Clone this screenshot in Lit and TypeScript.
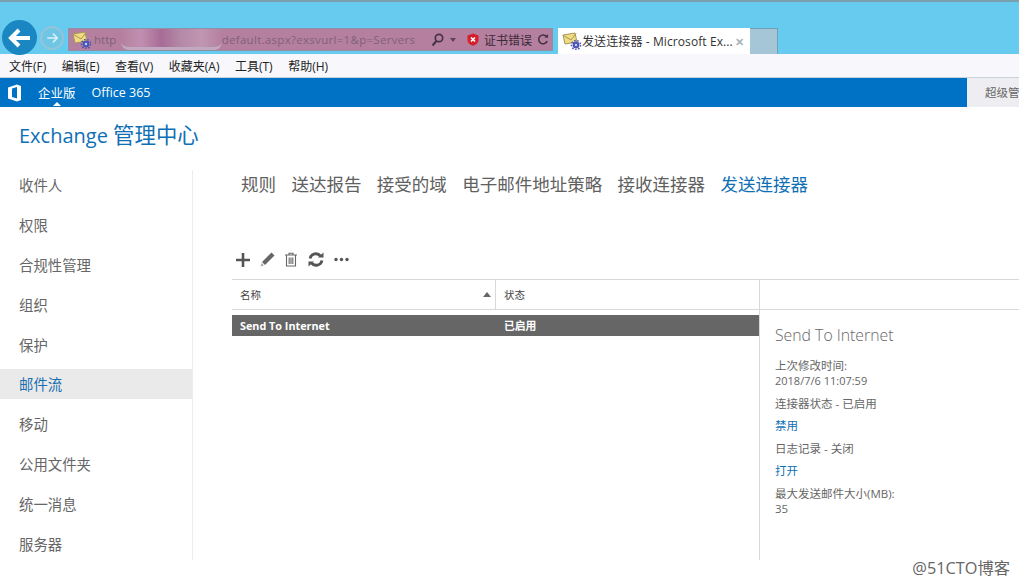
import { LitElement, html, css, svg } from "lit";
import { customElement } from "lit/decorators.js";

const menus = ["文件(F)", "编辑(E)", "查看(V)", "收藏夹(A)", "工具(T)", "帮助(H)"];
const navItems = ["收件人", "权限", "合规性管理", "组织", "保护", "邮件流", "移动", "公用文件夹", "统一消息", "服务器"];
const tabs = ["规则", "送达报告", "接受的域", "电子邮件地址策略", "接收连接器", "发送连接器"];

const favicon = svg`<svg class="fav" width="20" height="18" viewBox="0 0 20 18">
  <path d="M1 3 L13 1 L15 10 L3 12 Z" fill="#f0dc82" stroke="#a8955a" stroke-width="1"/>
  <path d="M1.5 3.5 L9 8 L14 1.5" fill="none" stroke="#a8955a" stroke-width="1"/>
  <circle cx="14" cy="13" r="3.4" fill="#4a55b5"/>
  <circle cx="14" cy="13" r="4.6" fill="none" stroke="#4a55b5" stroke-width="1.4" stroke-dasharray="1.6 1.6"/>
  <circle cx="14" cy="13" r="1.2" fill="#c8d0f0"/>
</svg>`;

@customElement("app-root")
export class AppRoot extends LitElement {
  static styles = css`
    :host {
      display: block;
      width: 1019px;
      height: 585px;
      overflow: hidden;
      background: #fff;
      font-family: "Open Sans", "Noto Sans CJK SC", sans-serif;
      color: #444;
    }
    .chrome {
      height: 54px;
      box-sizing: border-box;
      background: #66cbee;
      border-top: 2px solid #7a9fae;
      display: flex;
      align-items: flex-start;
      padding: 18px 0 0 2px;
    }
    .back {
      width: 35px;
      height: 35px;
      border-radius: 50%;
      background: #1a86c2;
      display: flex;
      align-items: center;
      justify-content: center;
      flex: none;
    }
    .forward {
      width: 24px;
      height: 24px;
      margin: 6px 0 0 3px;
      box-sizing: border-box;
      border-radius: 50%;
      border: 2px solid #93c4d9;
      background: #6ec5e4;
      display: flex;
      align-items: center;
      justify-content: center;
      flex: none;
    }
    .address {
      margin: 8px 0 0 4px;
      width: 485px;
      height: 23px;
      box-sizing: border-box;
      background: #b5809f;
      border: 1px solid #8f8fa5;
      display: flex;
      align-items: center;
      padding: 0 3px;
      font-size: 11.5px;
      color: #80607a;
      white-space: nowrap;
      flex: none;
    }
    .address .fav {
      flex: none;
    }
    .url-start {
      margin-left: 2px;
      width: 27px;
    }
    .smudge {
      width: 101px;
      height: 21px;
      box-sizing: border-box;
      border-bottom: 3px solid #c0aabf;
      border-radius: 0 0 8px 8px;
      background: linear-gradient(90deg, #b5809f, #c08fb0 20%, #a86c96 40%, #b58aa8 60%, #c096b2 80%, #b5809f);
    }
    .url-end {
      letter-spacing: 0.3px;
      width: 210px;
    }
    .addr-tools {
      display: flex;
      align-items: center;
      color: #3a2a38;
      font-size: 12px;
    }
    .caret {
      width: 0;
      height: 0;
      border: 3px solid transparent;
      border-top: 4px solid #5a4558;
      border-bottom: 0;
      margin: 0 11px 0 6px;
    }
    .cert {
      margin: 0 5px;
    }
    .tab {
      margin: 8px 0 0 5px;
      width: 192px;
      height: 26px;
      box-sizing: border-box;
      background: #fff;
      display: flex;
      align-items: center;
      padding: 0 6px 0 4px;
      font-size: 12px;
      color: #333;
      white-space: nowrap;
      flex: none;
    }
    .tab span {
      flex: 1;
      letter-spacing: 0.1px;
    }
    .tab b {
      color: #a9b4bc;
      font-weight: 700;
      font-size: 11px;
    }
    .tab-blank {
      margin-top: 8px;
      width: 28px;
      height: 26px;
      box-sizing: border-box;
      background: #a5c6d6;
      border: 1px solid #6fa0b8;
      border-bottom: 0;
      border-left: 0;
      flex: none;
    }
    .menubar {
      height: 23px;
      background: #f8f8fc;
      display: flex;
      align-items: center;
      gap: 15.5px;
      padding-left: 9px;
      font-size: 12px;
      color: #222;
    }
    .o365 {
      height: 30px;
      box-sizing: border-box;
      border-top: 1px solid #c8d4dc;
      background: #0072c6;
      display: flex;
      align-items: center;
      color: #fff;
      font-size: 12.5px;
    }
    .o365 svg {
      margin: 0 15px 0 7px;
    }
    .o365 .suite {
      position: relative;
      margin-right: 16px;
    }
    .o365 .suite::after {
      content: "";
      position: absolute;
      left: 50%;
      margin-left: -4px;
      top: 19px;
      border: 4px solid transparent;
      border-top: 0;
      border-bottom-color: #fff;
    }
    .o365 .grow {
      flex: 1;
    }
    .user {
      width: 52px;
      height: 100%;
      box-sizing: border-box;
      padding-left: 18px;
      background: #eeeef2;
      color: #666;
      font-size: 11.5px;
      line-height: 29px;
      white-space: nowrap;
      overflow: hidden;
    }
    h1 {
      margin: 0;
      height: 63px;
      box-sizing: border-box;
      padding: 14px 0 0 19px;
      font-size: 20px;
      line-height: 28px;
      font-weight: 400;
      color: #0f6fb5;
    }
    h1 span {
      font-size: 21.4px;
    }
    .body {
      display: flex;
      height: 390px;
    }
    nav {
      width: 193px;
      box-sizing: border-box;
      border-right: 1px solid #ececec;
      flex: none;
    }
    nav div {
      height: 39.9px;
      font-size: 14.4px;
      color: #666;
    }
    nav div span {
      display: block;
      height: 30px;
      box-sizing: border-box;
      padding: 1px 0 0 19px;
      line-height: 30px;
    }
    nav div.on span {
      background: #eaeaea;
      color: #1a6fae;
    }
    .main {
      flex: 1;
      display: flex;
      flex-direction: column;
      min-width: 0;
    }
    .tabs {
      display: flex;
      gap: 15.4px;
      padding: 1px 0 0 48px;
      height: 66px;
      box-sizing: border-box;
      font-size: 17.5px;
      line-height: 26px;
      color: #606060;
    }
    .tabs .on {
      color: #0f6fb5;
    }
    .tools {
      height: 43px;
      display: flex;
      align-items: center;
      padding: 4px 0 0 42px;
      box-sizing: border-box;
    }
    .tools svg {
      margin-right: 8px;
    }
    .tools svg.wide {
      margin-right: 10px;
    }
    .grid {
      display: flex;
      flex: 1;
      min-height: 0;
    }
    .list {
      width: 527px;
      margin-left: 39px;
      flex: none;
    }
    .thead {
      height: 31px;
      box-sizing: border-box;
      border-top: 1px solid #d8d8d8;
      border-bottom: 1px solid #d8d8d8;
      display: flex;
      font-size: 10.5px;
      color: #444;
      line-height: 30px;
    }
    .thead .name {
      width: 264px;
      box-sizing: border-box;
      padding: 0 4px 0 8px;
      border-right: 1px solid #d8d8d8;
      display: flex;
      justify-content: space-between;
      align-items: center;
    }
    .thead .status {
      padding-left: 8px;
    }
    .sort {
      width: 0;
      height: 0;
      border: 4px solid transparent;
      border-top: 0;
      border-bottom: 5px solid #666;
    }
    .row {
      margin-top: 5px;
      height: 21px;
      background: #666;
      color: #fff;
      display: flex;
      font-size: 10.8px;
      font-weight: 700;
      line-height: 21px;
    }
    .row span:first-child {
      width: 264px;
      box-sizing: border-box;
      padding-left: 8px;
    }
    .row span:last-child {
      padding-left: 8px;
    }
    .side {
      flex: 1;
      border-left: 1px solid #d8d8d8;
      display: flex;
      flex-direction: column;
    }
    .side-head {
      height: 31px;
      box-sizing: border-box;
      border-top: 1px solid #d8d8d8;
      border-bottom: 1px solid #d8d8d8;
    }
    .detail {
      padding: 14px 0 0 15px;
      font-size: 11.5px;
      line-height: 15px;
      color: #666;
    }
    .detail h2 {
      margin: 0 0 12px;
      font-size: 15.8px;
      line-height: 22px;
      font-weight: 300;
      color: #666;
    }
    .detail p {
      margin: 0 0 7.6px;
    }
    .detail .date {
      font-size: 11px;
    }
    .detail a {
      color: #0f6fb5;
      display: block;
      margin-bottom: 7.6px;
    }
    .mark {
      text-align: right;
      padding-right: 9px;
      font-size: 16.3px;
      line-height: 16px;
      color: #666;
    }
  `;

  render() {
    return html`
      <div class="chrome">
        <div class="back">
          <svg width="24" height="20" viewBox="0 0 24 20"><path d="M11 2 L3 10 L11 18 M3.5 10 H22" fill="none" stroke="#fff" stroke-width="4"/></svg>
        </div>
        <div class="forward">
          <svg width="13" height="12" viewBox="0 0 15 13"><path d="M8 1.5 L13 6.5 L8 11.5 M13 6.5 H1.5" fill="none" stroke="#d8f0f8" stroke-width="1.8"/></svg>
        </div>
        <div class="address">
          ${favicon}
          <span class="url-start">http</span>
          <span class="smudge"></span>
          <span class="url-end">default.aspx?exsvurl=1&amp;p=Servers</span>
          <span class="addr-tools">
            <svg width="13" height="14" viewBox="0 0 13 14"><circle cx="8" cy="5" r="3.7" fill="none" stroke="#453345" stroke-width="1.7"/><path d="M5.4 8 L1.5 12.5" stroke="#453345" stroke-width="2"/></svg>
            <i class="caret"></i>
            <svg width="12" height="13" viewBox="0 0 12 13"><path d="M6 .5 L11.5 2.5 V7 C11.5 10 8.5 12 6 12.8 C3.5 12 .5 10 .5 7 V2.5 Z" fill="#d5202c"/><path d="M4 4.5 L8 8.5 M8 4.5 L4 8.5" stroke="#fff" stroke-width="1.6"/></svg>
            <span class="cert">证书错误</span>
            <svg width="12" height="13" viewBox="0 0 12 13"><path d="M9.8 4 A4.4 4.4 0 1 0 10.2 8" fill="none" stroke="#453345" stroke-width="1.6"/><path d="M7.5 4.6 L11 4.8 V1 Z" fill="#453345"/></svg>
          </span>
        </div>
        <div class="tab">
          ${favicon}<span>发送连接器 - Microsoft Ex...</span><b>✕</b>
        </div>
        <div class="tab-blank"></div>
      </div>
      <div class="menubar">
        ${menus.map((m) => html`<span>${m}</span>`)}
      </div>
      <div class="o365">
        <svg width="16" height="18" viewBox="0 0 16 18"><path d="M1 3.5 L10 .5 L14 2 V16 L10 17.5 L1 14.5 Z M10 3 L5 4.5 V13 L10 14.5 Z" fill="#fff" fill-rule="evenodd"/></svg>
        <span class="suite">企业版</span>
        <span>Office 365</span>
        <span class="grow"></span>
        <div class="user">超级管理员</div>
      </div>
      <h1>Exchange <span>管理中心</span></h1>
      <div class="body">
        <nav>
          ${navItems.map((n) => html`<div class=${n === "邮件流" ? "on" : ""}><span>${n}</span></div>`)}
        </nav>
        <div class="main">
          <div class="tabs">
            ${tabs.map((t) => html`<span class=${t === "发送连接器" ? "on" : ""}>${t}</span>`)}
          </div>
          <div class="tools">
            <svg width="16" height="16" viewBox="0 0 16 16"><path d="M8 1 V15 M1 8 H15" stroke="#555" stroke-width="2.6"/></svg>
            <svg width="17" height="17" viewBox="0 0 17 17"><path d="M12.5 1.5 L15.5 4.5 L6 14 L3 11 Z" fill="#666"/><path d="M2.5 12 L5 14.5 L1.5 15.5 Z" fill="#aaa"/></svg>
            <svg class="wide" width="14" height="15" viewBox="0 0 14 15"><path d="M1 3 H13 M5 3 V1.2 H9 V3 M2.5 3 V14 H11.5 V3 M5.2 5.5 V12 M7 5.5 V12 M8.8 5.5 V12" fill="none" stroke="#666" stroke-width="1.1"/></svg>
            <svg class="wide" width="16" height="15" viewBox="0 0 16 15"><path d="M2 6.5 A6 6 0 0 1 12.5 4 M14 8.5 A6 6 0 0 1 3.5 11" fill="none" stroke="#555" stroke-width="2.8"/><path d="M10 5.5 H15.5 V0.5 Z M6 9.5 H.5 V14.5 Z" fill="#555"/></svg>
            <svg width="15" height="5" viewBox="0 0 15 5"><circle cx="2" cy="2.5" r="1.7" fill="#555"/><circle cx="7.5" cy="2.5" r="1.7" fill="#555"/><circle cx="13" cy="2.5" r="1.7" fill="#555"/></svg>
          </div>
          <div class="grid">
            <div class="list">
              <div class="thead">
                <div class="name">名称<i class="sort"></i></div>
                <div class="status">状态</div>
              </div>
              <div class="row"><span>Send To Internet</span><span>已启用</span></div>
            </div>
            <div class="side">
              <div class="side-head"></div>
              <div class="detail">
                <h2>Send To Internet</h2>
                <p>上次修改时间:<br /><span class="date">2018/7/6 11:07:59</span></p>
                <p>连接器状态 - 已启用</p>
                <a>禁用</a>
                <p>日志记录 - 关闭</p>
                <a>打开</a>
                <p>最大发送邮件大小(MB):<br />35</p>
              </div>
            </div>
          </div>
        </div>
      </div>
      <div class="mark">@51CTO博客</div>
    `;
  }
}
